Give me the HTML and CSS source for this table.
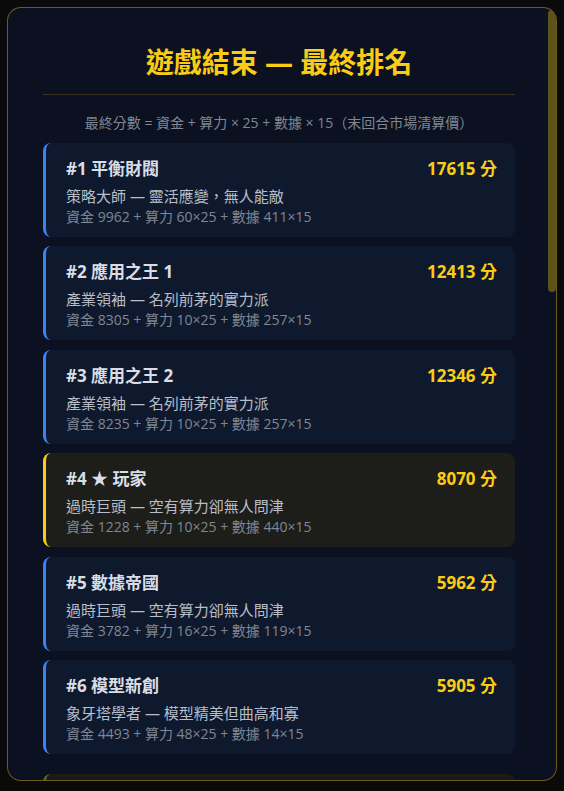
FILE: index.html
```html
<!DOCTYPE html>
<html lang="zh-Hant">
<head>
    <meta charset="UTF-8">
    <meta name="viewport" content="width=device-width, initial-scale=1.0">
    <title>遊戲結束 — 最終排名</title>
    <link rel="stylesheet" href="styles.css">
</head>
<body>
    <div class="modal">
        <div class="modal-body">
            <h1 class="title">遊戲結束 — 最終排名</h1>
            <p class="formula">最終分數 = 資金 + 算力 × 25 + 數據 × 15（末回合市場清算價）</p>

            <div class="rank-list">
                <div class="rank-card">
                    <div class="rank-head">
                        <span class="rank-name">#1 平衡財閥</span>
                        <span class="rank-score">17615 分</span>
                    </div>
                    <div class="rank-title">策略大師 — 靈活應變，無人能敵</div>
                    <div class="rank-detail">資金 9962 + 算力 60×25 + 數據 411×15</div>
                </div>
                <div class="rank-card">
                    <div class="rank-head">
                        <span class="rank-name">#2 應用之王 1</span>
                        <span class="rank-score">12413 分</span>
                    </div>
                    <div class="rank-title">產業領袖 — 名列前茅的實力派</div>
                    <div class="rank-detail">資金 8305 + 算力 10×25 + 數據 257×15</div>
                </div>
                <div class="rank-card">
                    <div class="rank-head">
                        <span class="rank-name">#3 應用之王 2</span>
                        <span class="rank-score">12346 分</span>
                    </div>
                    <div class="rank-title">產業領袖 — 名列前茅的實力派</div>
                    <div class="rank-detail">資金 8235 + 算力 10×25 + 數據 257×15</div>
                </div>
                <div class="rank-card player">
                    <div class="rank-head">
                        <span class="rank-name">#4 ★ 玩家</span>
                        <span class="rank-score">8070 分</span>
                    </div>
                    <div class="rank-title">過時巨頭 — 空有算力卻無人問津</div>
                    <div class="rank-detail">資金 1228 + 算力 10×25 + 數據 440×15</div>
                </div>
                <div class="rank-card">
                    <div class="rank-head">
                        <span class="rank-name">#5 數據帝國</span>
                        <span class="rank-score">5962 分</span>
                    </div>
                    <div class="rank-title">過時巨頭 — 空有算力卻無人問津</div>
                    <div class="rank-detail">資金 3782 + 算力 16×25 + 數據 119×15</div>
                </div>
                <div class="rank-card">
                    <div class="rank-head">
                        <span class="rank-name">#6 模型新創</span>
                        <span class="rank-score">5905 分</span>
                    </div>
                    <div class="rank-title">象牙塔學者 — 模型精美但曲高和寡</div>
                    <div class="rank-detail">資金 4493 + 算力 48×25 + 數據 14×15</div>
                </div>
            </div>

            <div class="summary"></div>
        </div>
        <div class="scrollbar">
            <div class="scroll-thumb"></div>
        </div>
    </div>
</body>
</html>
```

FILE: styles.css
```css
* {
    box-sizing: border-box;
}
body {
    margin: 0;
    padding: 7px;
    background: #0a0a0a;
    font-family: "Open Sans", "Noto Sans CJK TC", sans-serif;
    color: #e2e8f0;
}
.modal {
    display: flex;
    height: 774px;
    background: #0b1120;
    border: 1px solid rgba(250, 204, 21, 0.4);
    border-radius: 14px;
    overflow: hidden;
}
.modal-body {
    flex: 1;
    min-width: 0;
    padding: 36px 33px 0 35px;
    overflow: hidden;
}
.scrollbar {
    width: 8px;
    flex-shrink: 0;
    padding-top: 2px;
}
.scroll-thumb {
    height: 282px;
    background: rgba(250, 204, 21, 0.35);
    border-radius: 4px;
}
.title {
    margin: 0;
    padding-bottom: 14px;
    border-bottom: 1px solid rgba(250, 204, 21, 0.18);
    font-size: 28px;
    line-height: 36px;
    font-weight: 700;
    text-align: center;
    color: #facc15;
}
.formula {
    margin: 18px 0 10px;
    font-size: 14px;
    line-height: 20px;
    text-align: center;
    color: #7f8794;
}
.rank-list {
    display: flex;
    flex-direction: column;
    gap: 9.4px;
}
.rank-card {
    padding: 14px 18px 9px 20px;
    background: #0f192d;
    border-left: 3px solid #3b82f6;
    border-radius: 8px;
}
.rank-card.player {
    background: #1d1d1a;
    border-left-color: #facc15;
}
.rank-head {
    display: flex;
    justify-content: space-between;
    align-items: center;
    margin-bottom: 5px;
    line-height: 24px;
}
.rank-name {
    font-size: 17px;
    font-weight: 700;
    color: #d9dee6;
}
.rank-score {
    font-size: 17px;
    font-weight: 700;
    color: #facc15;
}
.rank-title {
    font-size: 15px;
    line-height: 20px;
    color: #b8bec8;
}
.rank-detail {
    font-size: 14px;
    line-height: 22px;
    color: #7f8794;
}
.summary {
    margin-top: 20px;
    height: 120px;
    background: #1b1a16;
    border-left: 3px solid #6b6420;
    border-radius: 8px;
}
```
